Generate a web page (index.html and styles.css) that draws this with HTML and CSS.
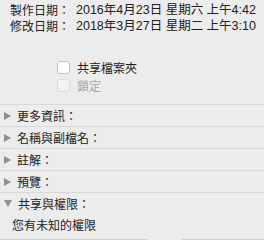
FILE: index.html
```html
<!DOCTYPE html>
<html>
<head>
<meta charset="utf-8">
<link rel="stylesheet" href="styles.css">
</head>
<body>
<div class="panel">
  <div class="info">
    <div class="label">製作日期：</div><div class="value">2016年4月23日 星期六 上午4:42</div>
    <div class="label">修改日期：</div><div class="value">2018年3月27日 星期二 上午3:10</div>
  </div>
  <div class="checks">
    <div class="check"><span class="box"></span><span>共享檔案夾</span></div>
    <div class="check disabled"><span class="box"></span><span>鎖定</span></div>
  </div>
  <div class="rows">
    <div class="row"><span class="tri"></span><span>更多資訊：</span></div>
    <div class="row"><span class="tri"></span><span>名稱與副檔名：</span></div>
    <div class="row"><span class="tri"></span><span>註解：</span></div>
    <div class="row"><span class="tri"></span><span>預覽：</span></div>
    <div class="row open"><span class="tri down"></span><span>共享與權限：</span></div>
  </div>
  <div class="perm">您有未知的權限</div>
  <div class="bottom"><span class="seg a"></span><span class="seg b"></span></div>
</div>
</body>
</html>
```
FILE: styles.css
```css
html, body {
  margin: 0;
  padding: 0;
  background: #ececec;
}
body {
  width: 264px;
  height: 240px;
  overflow: hidden;
  font-family: "Noto Sans CJK TC", "Liberation Sans", sans-serif;
  font-size: 12px;
  color: #222222;
}
.panel {
  display: flex;
  flex-direction: column;
  height: 240px;
}
.info {
  display: grid;
  grid-template-columns: 66px auto;
  padding: 2px 0 0 10px;
  line-height: 16px;
  white-space: nowrap;
}
.value {
  font-family: "Liberation Sans", "Noto Sans CJK TC", sans-serif;
  font-size: 12.5px;
}
.checks {
  display: flex;
  flex-direction: column;
  padding-left: 57px;
  margin-top: 24px;
}
.check {
  display: flex;
  align-items: center;
  gap: 7px;
  height: 18px;
}
.box {
  width: 11px;
  height: 11px;
  background: #ffffff;
  border: 1px solid #c2c2c2;
  border-radius: 3px;
}
.check.disabled {
  color: #a9a9a9;
}
.check.disabled .box {
  background: #f3f3f3;
  border-color: #dadada;
}
.rows {
  margin-top: 10px;
  display: flex;
  flex-direction: column;
}
.row {
  display: flex;
  align-items: center;
  height: 21px;
  border-top: 1px solid #d9d9d9;
  gap: 6px;
  padding-left: 4px;
}
.tri {
  width: 0;
  height: 0;
  border-top: 4px solid transparent;
  border-bottom: 4px solid transparent;
  border-left: 7px solid #8e8e8e;
}
.tri.down {
  border-left: 4px solid transparent;
  border-right: 4px solid transparent;
  border-top: 7px solid #8e8e8e;
  border-bottom: 0;
}
.perm {
  padding: 3px 0 0 12px;
  line-height: 16px;
}
.bottom {
  margin-top: auto;
  display: flex;
  height: 1px;
}
.seg {
  height: 1px;
  background: #cfcfcf;
}
.seg.a { width: 147px; }
.seg.b { margin-left: 35px; flex: 1; }
```
